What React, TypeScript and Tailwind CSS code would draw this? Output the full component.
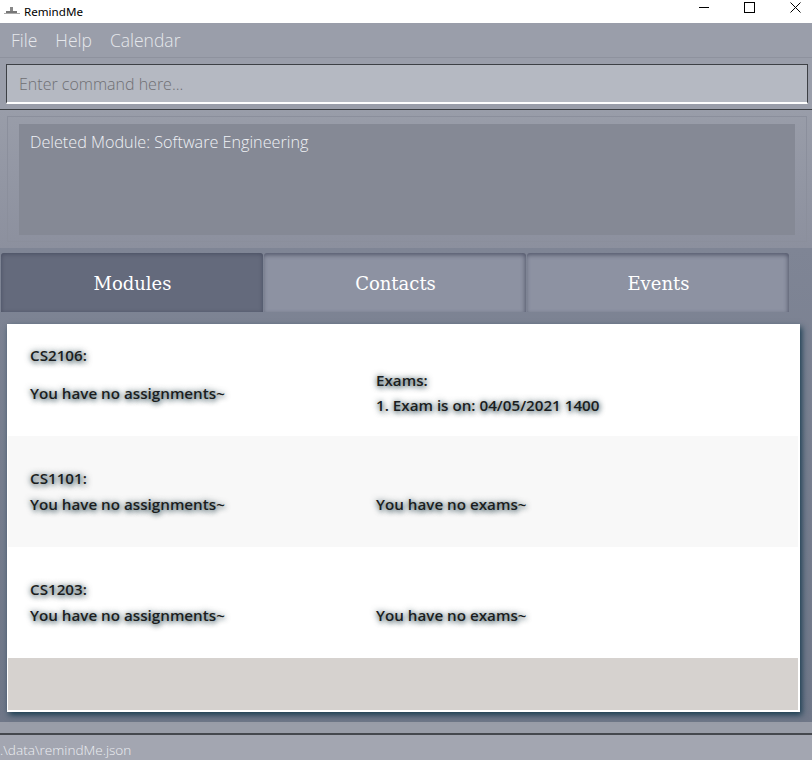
const glow = "[text-shadow:0_0_6px_rgba(20,50,60,0.7),1px_2px_5px_rgba(20,50,60,0.6)]"

function ModuleRow({ code, right, bg, first }: { code: string; right: string[]; bg: string; first?: boolean }) {
  return (
    <div className={`${bg} ${first ? "h-[112px]" : "h-[111px]"} shrink-0 flex pl-[22px] text-[15.2px] leading-[22px] font-semibold text-[#1a1d20] ${glow}`}>
      <div className="w-[346px] shrink-0 flex flex-col">
        <div className={first ? "pt-[20px] h-[58px]" : "pt-[31px] h-[57px]"}>{code}</div>
        <div>You have no assignments~</div>
      </div>
      <div className={`flex flex-col ${first ? "pt-[45px] gap-[3px]" : "pt-[57px]"}`}>
        {right.map((line) => (
          <div key={line}>{line}</div>
        ))}
      </div>
    </div>
  )
}

function Tab({ label, active }: { label: string; active?: boolean }) {
  return (
    <div
      className={`w-[262px] h-[59px] pt-[2px] pl-[1px] rounded-t-[3px] flex items-center justify-center text-[18px] text-white font-['DejaVu_Serif',serif] ${
        active
          ? "bg-[#646a7c] shadow-[inset_0_1px_4px_rgba(60,65,85,0.7)]"
          : "bg-[#8d92a2] shadow-[inset_-1px_2px_4px_rgba(70,75,95,0.8)]"
      }`}
    >
      {label}
    </div>
  )
}

export default function App() {
  return (
    <div className="w-[812px] h-[760px] flex flex-col overflow-hidden font-['Open_Sans','Noto_Sans',sans-serif] bg-[#9a9eaa]">
      <div className="h-[23px] shrink-0 bg-white flex items-center text-black">
        <svg width="16" height="9" viewBox="0 0 16 9" className="ml-[4px]">
          <rect x="6" y="0" width="3" height="4" fill="#888" />
          <rect x="2" y="4" width="11" height="2" fill="#777" />
          <rect x="0" y="6" width="16" height="1" fill="#aaa" />
        </svg>
        <span className="ml-[4px] text-[11.6px] font-['Noto_Sans',sans-serif]">RemindMe</span>
        <div className="ml-auto flex items-start self-start pt-[2px] pr-[11px] gap-[35px]">
          <svg width="10" height="11" viewBox="0 0 10 11">
            <path d="M0 5.5H10" stroke="#000" strokeWidth="1" />
          </svg>
          <svg width="11" height="11" viewBox="0 0 11 11">
            <rect x="0.5" y="0.5" width="10" height="10" fill="none" stroke="#000" strokeWidth="1" />
          </svg>
          <svg width="11" height="11" viewBox="0 0 11 11">
            <path d="M0.5 0.5L10.5 10.5M10.5 0.5L0.5 10.5" stroke="#000" strokeWidth="1" />
          </svg>
        </div>
      </div>

      <div className="h-[35px] shrink-0 flex items-center gap-[18px] pl-[11px] text-[17.5px] text-[#e6e8ec] border-b border-[#8e929e] font-light">
        <span>File</span>
        <span>Help</span>
        <span>Calendar</span>
      </div>

      <div className="h-[52px] shrink-0 pl-[6px] pr-[4px] pt-[6px] border-b border-[#3d4045]">
        <div className="h-[40px] bg-[#b5b9c2] border-x border-t border-[#3d4045] border-b-2 border-b-white flex items-center pl-[12px] text-[16px] text-[#6f6f73] font-light">
          Enter command here...
        </div>
      </div>

      <div className="h-[138px] shrink-0 bg-gradient-to-b from-[#999da9] to-[#8c909e] pl-[7px] pr-[5px] pt-[6px]">
        <div className="h-[126px] border border-[#8b8f9c] px-[11px] pt-[7px]">
          <div className="h-[111px] bg-[#858995] pl-[11px] pt-[7px] text-[16.2px] leading-[22px] text-[#f0f2f5] font-light">
            Deleted Module: Software Engineering
          </div>
        </div>
      </div>

      <div className="flex-1 bg-gradient-to-b from-[#7f8595] to-[#6f7788] flex flex-col">
        <div className="flex gap-[1px] pl-[1px] pt-[5px] shrink-0">
          <Tab label="Modules" active />
          <Tab label="Contacts" />
          <Tab label="Events" />
        </div>
        <div className="relative z-10 mt-[12px] ml-[7px] w-[793px] h-[388px] shrink-0 bg-[#d6d2cf] border-r-[2px] border-b-[2px] border-l border-white flex flex-col shadow-[2px_3px_6px_rgba(25,60,80,1)]">
          <ModuleRow code="CS2106:" right={["Exams:", "1. Exam is on: 04/05/2021 1400"]} bg="bg-white" first />
          <ModuleRow code="CS1101:" right={["You have no exams~"]} bg="bg-[#f8f8f8]" />
          <ModuleRow code="CS1203:" right={["You have no exams~"]} bg="bg-white" />
        </div>
      </div>

      <div className="h-[13px] shrink-0 bg-[#999da8] border-b-2 border-[#45484e]" />
      <div className="h-[25px] shrink-0 bg-[#a3a6b1] text-[13.6px] leading-[30px] text-[#eceef1] font-light">
        .\data\remindMe.json
      </div>
    </div>
  )
}
